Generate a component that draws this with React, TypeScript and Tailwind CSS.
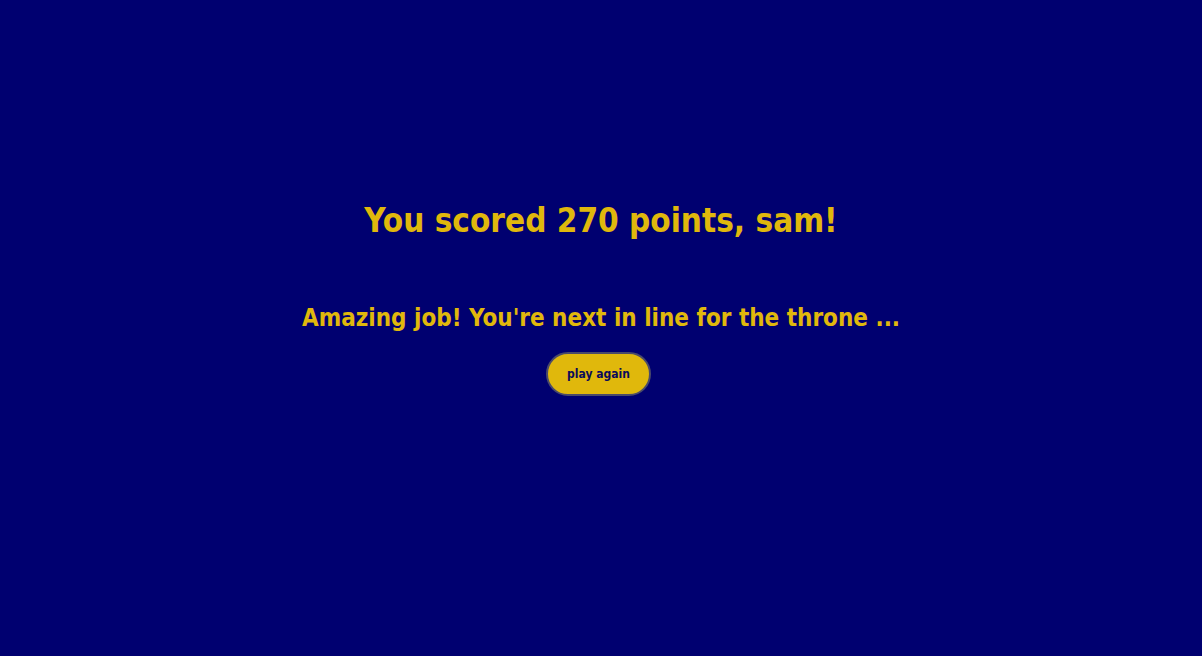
export default function App() {
  return (
    <div
      className="min-h-[656px] w-full bg-[#000070] flex flex-col items-center pt-[196px]"
      style={{ fontFamily: '"DejaVu Sans Condensed", "Liberation Sans", sans-serif' }}
    >
      <h1 className="text-[33px] leading-[50px] font-bold text-[#e0b80c]">You scored 270 points, sam!</h1>
      <h2 className="mt-[55px] text-[24px] leading-[34px] font-bold text-[#e0b80c]">
        Amazing job! You're next in line for the throne ...
      </h2>
      <button className="mt-[17px] mr-[5px] h-[44px] w-[105px] rounded-full bg-[#e0b80c] border-2 border-[#4a4a6a] text-[12px] font-bold text-[#0a0a5a]">
        play again
      </button>
    </div>
  );
}
